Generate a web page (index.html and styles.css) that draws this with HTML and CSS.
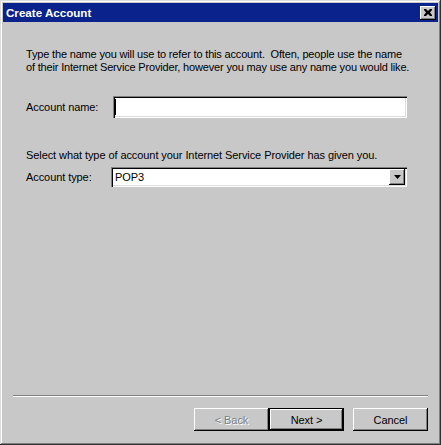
FILE: index.html
```html
<!DOCTYPE html>
<html lang="en">
<head>
    <meta charset="UTF-8">
    <title>Create Account</title>
    <link rel="stylesheet" href="styles.css">
</head>
<body>
<div class="window">
    <div class="titlebar">
        <span class="title">Create Account</span>
        <span class="close">
            <svg width="8" height="7" viewBox="0 0 8 7">
                <path d="M0 0h2l2 2 2-2h2v1l-2 2.5 2 2.5v1h-2l-2-2-2 2h-2v-1l2-2.5-2-2.5z" fill="#000"/>
            </svg>
        </span>
    </div>
    <div class="content">
        <p class="intro">Type the name you will use to refer to this account.&nbsp; Often, people use the name<br>of their Internet Service Provider, however you may use any name you would like.</p>
        <div class="field name-field">
            <label>Account name:</label>
            <div class="textbox"><span class="caret"></span></div>
        </div>
        <p class="hint">Select what type of account your Internet Service Provider has given you.</p>
        <div class="field type-field">
            <label>Account type:</label>
            <div class="combo">
                <span class="combo-value">POP3</span>
                <span class="drop">
                    <svg width="7" height="4" viewBox="0 0 7 4"><path d="M0 0h7l-3.5 4z" fill="#000"/></svg>
                </span>
            </div>
        </div>
    </div>
    <div class="footer">
        <div class="separator"></div>
        <div class="buttons">
            <button class="btn disabled">&lt; Back</button>
            <button class="btn default">Next &gt;</button>
            <button class="btn cancel">Cancel</button>
        </div>
    </div>
</div>
</body>
</html>
```

FILE: styles.css
```css
/* Reset */
* {
    box-sizing: border-box;
    margin: 0;
    padding: 0;
}

body {
    font-family: 'Liberation Sans', Arial, sans-serif;
    font-size: 11px;
    line-height: 13px;
    letter-spacing: -0.08px;
    color: #000;
    background: #c8c8c8;
}

/* Window frame */
.window {
    width: 441px;
    height: 445px;
    padding: 3px;
    background: #c8c8c8;
    display: flex;
    flex-direction: column;
    box-shadow: inset -1px -1px #303030, inset 1px 1px #dcdcdc,
                inset -2px -2px #808080, inset 2px 2px #fff;
}

/* Title bar */
.titlebar {
    height: 19px;
    background: #0a228c;
    display: flex;
    align-items: center;
    justify-content: space-between;
    padding: 0 2px 0 3px;
}

.title {
    color: #fff;
    font-weight: bold;
    font-size: 11.6px;
    letter-spacing: 0;
}

.close {
    width: 16px;
    height: 14px;
    background: #c8c8c8;
    display: flex;
    align-items: center;
    justify-content: center;
    box-shadow: inset -1px -1px #000, inset 1px 1px #fff, inset -2px -2px #808080;
}

/* Content */
.content {
    flex: 1;
    padding: 26px 30px 0 23px;
}

.intro {
    margin-bottom: 22px;
    white-space: nowrap;
    letter-spacing: -0.17px;
}

.field {
    display: flex;
    align-items: center;
}

.field label {
    width: 87px;
}

.textbox {
    width: 294px;
    height: 22px;
    background: #fff;
    padding: 3px 2px;
    box-shadow: inset 1px 1px #808080, inset 2px 2px #000, inset -1px -1px #fff, inset -2px -2px #dcdcdc;
}

.caret {
    display: block;
    width: 1px;
    height: 16px;
    background: #000;
}

.hint {
    margin-top: 31px;
    margin-bottom: 5px;
    white-space: nowrap;
}

.type-field label {
    width: 85px;
}

.combo {
    width: 296px;
    height: 20px;
    background: #fff;
    display: flex;
    align-items: center;
    justify-content: space-between;
    padding: 2px;
    box-shadow: inset 1px 1px #808080, inset 2px 2px #000, inset -1px -1px #fff, inset -2px -2px #dcdcdc;
}

.combo-value {
    padding-left: 2px;
}

.drop {
    width: 16px;
    height: 16px;
    background: #c8c8c8;
    display: flex;
    align-items: center;
    justify-content: center;
    box-shadow: inset -1px -1px #000, inset 1px 1px #fff, inset -2px -2px #808080;
}

/* Footer */
.footer {
    padding: 0 10px 11px 10px;
}

.separator {
    height: 2px;
    border-top: 1px solid #808080;
    border-bottom: 1px solid #fff;
}

.buttons {
    display: flex;
    justify-content: flex-end;
    margin-top: 11px;
}

.btn {
    width: 75px;
    height: 23px;
    font-family: inherit;
    font-size: 11px;
    letter-spacing: -0.08px;
    background: #c8c8c8;
    border: none;
    box-shadow: inset -1px -1px #000, inset 1px 1px #fff, inset -2px -2px #808080;
}

.btn.disabled {
    color: #808080;
    text-shadow: 1px 1px #fff;
}

.btn.default {
    box-shadow: inset 0 0 0 1px #000, inset -2px -2px #000, inset 2px 2px #fff, inset -3px -3px #808080;
}

.btn.cancel {
    margin-left: 9px;
}
```
